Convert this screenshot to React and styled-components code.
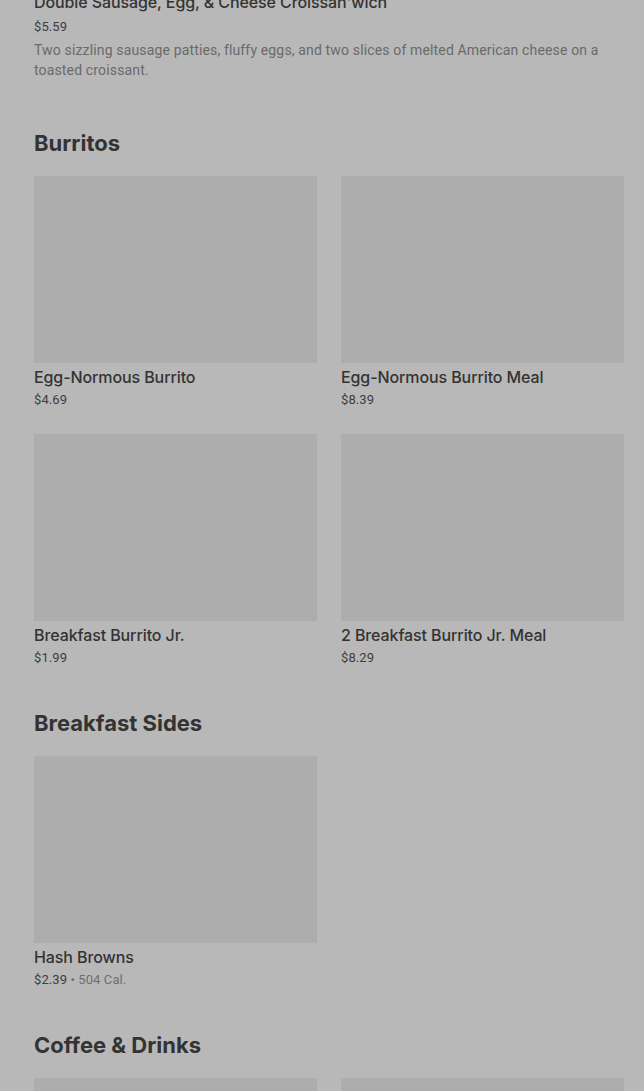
import styled, { createGlobalStyle } from "styled-components"

const GlobalStyle = createGlobalStyle`
  html, body {
    margin: 0;
    padding: 0;
    background: #b8b8b8;
  }
  body {
    font-family: Inter, "Liberation Sans", sans-serif;
    -webkit-font-smoothing: antialiased;
  }
`

const Page = styled.div`
  height: 1091px;
  overflow: hidden;
  background: #b8b8b8;
  padding: 0 20px 0 34px;
`

const TopItem = styled.div`
  margin-top: -8px;
  padding-bottom: 8px;
`

const Section = styled.section`
  padding-top: 39px;
`

const Heading = styled.h2`
  margin: 0 0 17px;
  font-size: 22px;
  line-height: 32px;
  font-weight: 700;
  letter-spacing: 0;
  color: #333333;
`

const Grid = styled.div`
  display: grid;
  grid-template-columns: 283px 283px;
  column-gap: 24px;
  row-gap: 24px;
`

const Item = styled.div`
  display: flex;
  flex-direction: column;
`

const Thumb = styled.div`
  height: 187px;
  background: #adadad;
`

const Title = styled.div`
  margin-top: ${p => (p.$flat ? 0 : 4)}px;
  font-size: 16px;
  line-height: 20px;
  font-weight: 500;
  color: #333333;
  letter-spacing: -0.1px;
`

const Price = styled.div`
  margin-top: ${p => (p.$top ? 5 : 3)}px;
  font-family: Roboto, "Liberation Sans", sans-serif;
  font-size: 13px;
  line-height: 20px;
  color: #3d3d3d;
  letter-spacing: 0.1px;
`

const Cal = styled.span`
  color: #6f6f6f;
`

const Desc = styled.p`
  margin: 3px 0 0;
  font-family: Roboto, "Liberation Sans", sans-serif;
  font-size: 14px;
  line-height: 20px;
  color: #6a6a6a;
  letter-spacing: 0.15px;
`

const sections = [
  {
    name: "Burritos",
    items: [
      { title: "Egg-Normous Burrito", price: "$4.69" },
      { title: "Egg-Normous Burrito Meal", price: "$8.39" },
      { title: "Breakfast Burrito Jr.", price: "$1.99" },
      { title: "2 Breakfast Burrito Jr. Meal", price: "$8.29" },
    ],
  },
  {
    name: "Breakfast Sides",
    items: [{ title: "Hash Browns", price: "$2.39", cal: "504 Cal." }],
  },
  {
    name: "Coffee & Drinks",
    items: [
      { title: "", price: "" },
      { title: "", price: "" },
    ],
  },
]

const App = () => {
  return (
    <Page>
      <GlobalStyle />
      <TopItem>
        <Title $flat>Double Sausage, Egg, &amp; Cheese Croissan'wich</Title>
        <Price $top>$5.59</Price>
        <Desc>
          Two sizzling sausage patties, fluffy eggs, and two slices of melted
          American cheese on a toasted croissant.
        </Desc>
      </TopItem>

      {sections.map(section => (
        <Section key={section.name}>
          <Heading>{section.name}</Heading>
          <Grid>
            {section.items.map((item, i) => (
              <Item key={i}>
                <Thumb />
                {item.title && <Title>{item.title}</Title>}
                {item.price && (
                  <Price>
                    {item.price}
                    {item.cal && <Cal> • {item.cal}</Cal>}
                  </Price>
                )}
              </Item>
            ))}
          </Grid>
        </Section>
      ))}
    </Page>
  )
}

export default App
